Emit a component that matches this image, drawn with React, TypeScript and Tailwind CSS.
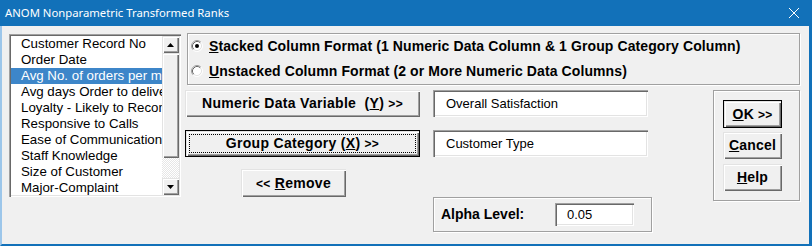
import React from "react";

const raised =
  "shadow-[inset_1px_1px_0_#e3e3e3,inset_2px_2px_0_#ffffff,inset_-1px_-1px_0_#696969,inset_-2px_-2px_0_#a0a0a0]";
const sunken =
  "shadow-[inset_1px_1px_0_#a0a0a0,inset_2px_2px_0_#696969,inset_-1px_-1px_0_#ffffff,inset_-2px_-2px_0_#e3e3e3]";
const etched = "border border-[#a0a0a0] shadow-[1px_1px_0_#ffffff,inset_1px_1px_0_#ffffff]";

function Radio({ checked }: { checked?: boolean }) {
  return (
    <svg width="12" height="12" viewBox="0 0 12 12" className="shrink-0">
      <circle cx="6" cy="6" r="5" fill="#ffffff" />
      <path d="M2.11 9.89 A5.5 5.5 0 0 1 9.89 2.11" stroke="#a0a0a0" fill="none" strokeWidth="1" />
      <path d="M9.89 2.11 A5.5 5.5 0 0 1 2.11 9.89" stroke="#ffffff" fill="none" strokeWidth="1" />
      <path d="M2.82 9.18 A4.5 4.5 0 0 1 9.18 2.82" stroke="#696969" fill="none" strokeWidth="1" />
      <path d="M9.18 2.82 A4.5 4.5 0 0 1 2.82 9.18" stroke="#e3e3e3" fill="none" strokeWidth="1" />
      {checked && <circle cx="6" cy="6" r="2" fill="#000000" />}
    </svg>
  );
}

function Arrow({ up }: { up?: boolean }) {
  return (
    <svg width="7" height="4" viewBox="0 0 7 4">
      {up ? <polygon points="0,4 7,4 3.5,0" fill="#000" /> : <polygon points="0,0 7,0 3.5,4" fill="#000" />}
    </svg>
  );
}

const items = [
  "Customer Record No",
  "Order Date",
  "Avg No. of orders per month",
  "Avg days Order to delivery",
  "Loyalty - Likely to Recommend",
  "Responsive to Calls",
  "Ease of Communication",
  "Staff Knowledge",
  "Size of Customer",
  "Major-Complaint",
];

export default function App() {
  return (
    <div
      className="w-[812px] h-[246px] flex flex-col bg-[#f0f0f0] overflow-hidden text-black"
      style={{ fontFamily: '"Liberation Sans", Arial, sans-serif' }}
    >
      {/* Title bar */}
      <div className="h-[26px] shrink-0 bg-[#1271b9] flex items-center justify-between pl-[5px] pr-[13px]">
        <span className="text-white text-[11.3px] leading-none" style={{ fontFamily: '"Noto Sans", sans-serif' }}>
          ANOM Nonparametric Transformed Ranks
        </span>
        <svg width="10" height="10" viewBox="0 0 10 10">
          <path d="M0 0 L10 10 M10 0 L0 10" stroke="#ffffff" strokeWidth="1" />
        </svg>
      </div>

      {/* Body */}
      <div className="flex-1 flex items-start border-l-2 border-l-[#9cc6ea] border-r-[3px] border-r-[#1271b9] border-b-2 border-b-[#1271b9] pt-[7px] pl-[7px]">
        {/* Listbox */}
        <div className={`mt-[1px] w-[172px] h-[163px] bg-white p-[2px] flex overflow-hidden ${sunken}`}>
          <div className="flex-1 flex flex-col overflow-hidden">
            {items.map((it, i) => (
              <div
                key={it}
                className={`h-[16px] shrink-0 pl-[10px] text-[13.3px] leading-[16px] whitespace-nowrap overflow-hidden ${
                  i === 2 ? "bg-[#3d86c9] text-white" : ""
                }`}
              >
                {it}
              </div>
            ))}
          </div>
          <div className="w-[17px] shrink-0 flex flex-col">
            <div className={`h-[17px] shrink-0 bg-[#f0f0f0] flex items-center justify-center ${raised}`}>
              <Arrow up />
            </div>
            <div className={`h-[105px] shrink-0 bg-[#f0f0f0] ${raised}`} />
            <div className="flex-1 bg-[repeating-conic-gradient(#e6e6e6_0_25%,#ffffff_0_50%)] bg-[length:2px_2px]" />
            <div className={`h-[17px] shrink-0 bg-[#f0f0f0] flex items-center justify-center ${raised}`}>
              <Arrow />
            </div>
          </div>
        </div>

        {/* Right area */}
        <div className="ml-[4px] flex flex-col">
          {/* Format group */}
          <div className={`ml-[2px] w-[613px] h-[52px] ${etched} pt-[2px] pl-[3px] flex flex-col gap-[5px] text-[14px] tracking-[0.1px] font-bold`}>
            <div className="h-[20px] flex items-center gap-[6px]">
              <Radio checked />
              <span>
                <span className="underline">S</span>tacked Column Format (1 Numeric Data Column &amp; 1 Group Category Column)
              </span>
            </div>
            <div className="h-[20px] flex items-center gap-[6px]">
              <Radio />
              <span>
                <span className="underline">U</span>nstacked Column Format (2 or More Numeric Data Columns)
              </span>
            </div>
          </div>

          {/* Lower section */}
          <div className="mt-[5px] flex items-start">
            {/* Buttons column */}
            <div className="w-[235px] flex flex-col text-[14px] tracking-[0.3px] font-bold">
              <div className={`h-[27px] bg-[#f0f0f0] flex items-center justify-center ${raised}`}>
                <span className="whitespace-pre">
                  Numeric Data Variable  (<span className="underline">Y</span>) <span className="text-[12px]">&gt;&gt;</span>
                </span>
              </div>
              <div className="mt-[13px] h-[27px] border border-black">
                <div className={`h-full bg-[#f0f0f0] p-[3px] ${raised}`}>
                  <div className="h-full border border-dotted border-black flex items-center justify-center">
                    <span className="whitespace-pre">
                      Group Category (<span className="underline">X</span>) <span className="text-[12px]">&gt;&gt;</span>
                    </span>
                  </div>
                </div>
              </div>
              <div className={`mt-[12px] ml-[56px] w-[105px] h-[28px] bg-[#f0f0f0] flex items-center justify-center ${raised}`}>
                <span className="whitespace-pre">
                  <span className="text-[12px]">&lt;&lt;</span> <span className="underline">R</span>emove
                </span>
              </div>
            </div>

            {/* Textboxes column */}
            <div className="ml-[13px] w-[219px] flex flex-col text-[13px]">
              <div className={`w-[215px] h-[27px] bg-white pl-[13px] flex items-center ${sunken}`}>Overall Satisfaction</div>
              <div className={`mt-[13px] w-[215px] h-[27px] bg-white pl-[13px] flex items-center ${sunken}`}>Customer Type</div>
              <div className={`mt-[40px] w-[219px] h-[35px] ${etched} pl-[7px] flex items-center`}>
                <span className="w-[114px] font-bold text-[14px]">Alpha Level:</span>
                <div className={`w-[79px] h-[23px] bg-white pl-[12px] flex items-center ${sunken}`}>0.05</div>
              </div>
            </div>

            {/* OK / Cancel / Help */}
            <div className={`ml-[61px] w-[87px] h-[111px] ${etched} pt-[9px] pl-[9px] flex flex-col text-[14px] tracking-[0.2px] font-bold`}>
              <div className="w-[59px] h-[28px] border border-black">
                <div className={`h-full bg-[#f0f0f0] flex items-center justify-center ${raised}`}>
                  <span className="whitespace-pre">
                    <span className="underline">O</span>K <span className="text-[12px]">&gt;&gt;</span>
                  </span>
                </div>
              </div>
              <div className={`mt-[4px] w-[59px] h-[27px] bg-[#f0f0f0] flex items-center justify-center ${raised}`}>
                <span>
                  <span className="underline">C</span>ancel
                </span>
              </div>
              <div className={`mt-[5px] w-[59px] h-[27px] bg-[#f0f0f0] flex items-center justify-center ${raised}`}>
                <span>
                  <span className="underline">H</span>elp
                </span>
              </div>
            </div>
          </div>
        </div>
      </div>
    </div>
  );
}
